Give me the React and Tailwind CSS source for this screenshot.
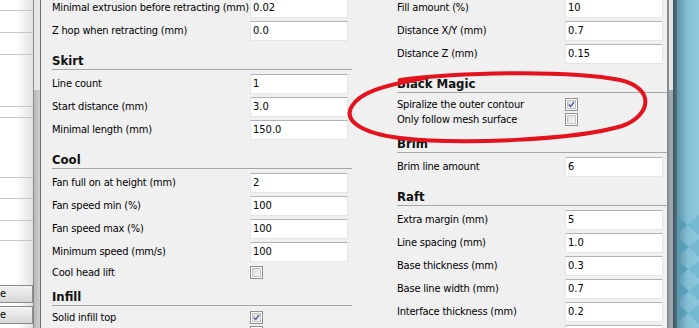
import React from 'react';

// Cura-style "Advanced" settings panel (Windows 7 look)
const leftRows = [
    { t: 'input', label: 'Minimal extrusion before retracting (mm)', value: '0.02' },
    { t: 'input', label: 'Z hop when retracting (mm)', value: '0.0' },
    { t: 'head', label: 'Skirt' },
    { t: 'input', label: 'Line count', value: '1' },
    { t: 'input', label: 'Start distance (mm)', value: '3.0' },
    { t: 'input', label: 'Minimal length (mm)', value: '150.0' },
    { t: 'head', label: 'Cool' },
    { t: 'input', label: 'Fan full on at height (mm)', value: '2' },
    { t: 'input', label: 'Fan speed min (%)', value: '100' },
    { t: 'input', label: 'Fan speed max (%)', value: '100' },
    { t: 'input', label: 'Minimum speed (mm/s)', value: '100' },
    { t: 'check', label: 'Cool head lift', checked: false },
    { t: 'head', label: 'Infill' },
    { t: 'check', label: 'Solid infill top', checked: true },
    { t: 'check', label: 'Solid infill bottom', checked: true },
];

const rightRows = [
    { t: 'input', label: 'Fill amount (%)', value: '10' },
    { t: 'input', label: 'Distance X/Y (mm)', value: '0.7' },
    { t: 'input', label: 'Distance Z (mm)', value: '0.15' },
    { t: 'head', label: 'Black Magic' },
    { t: 'check', label: 'Spiralize the outer contour', checked: true },
    { t: 'check', label: 'Only follow mesh surface', checked: false },
    { t: 'head', label: 'Brim' },
    { t: 'input', label: 'Brim line amount', value: '6' },
    { t: 'head', label: 'Raft' },
    { t: 'input', label: 'Extra margin (mm)', value: '5' },
    { t: 'input', label: 'Line spacing (mm)', value: '1.0' },
    { t: 'input', label: 'Base thickness (mm)', value: '0.3' },
    { t: 'input', label: 'Base line width (mm)', value: '0.7' },
    { t: 'input', label: 'Interface thickness (mm)', value: '0.2' },
    { t: 'input', label: 'Interface line width (mm)', value: '0.4' },
];

function CheckBox({ checked }) {
    return (
        <div className="w-[13px] h-[13px] border border-[#8f8f8f] bg-white p-[1px]">
            <div className="w-full h-full border border-[#c4c4c4] bg-gradient-to-br from-[#dcdcdc] to-[#f8f8f8] flex items-center justify-center">
                {checked && (
                    <svg width="9" height="9" viewBox="0 0 9 9">
                        <path d="M1 4.5 L3.5 7 L8 1.2" fill="none" stroke="#3f5690" strokeWidth="1.6" />
                    </svg>
                )}
            </div>
        </div>
    );
}

function Row({ row, labelW }) {
    if (row.t === 'head') {
        return (
            <div className="h-[26px] flex items-end border-b border-[#a6a6a6] mb-[4px]">
                <span className="text-[13px] leading-[16px] font-bold text-[#111]">{row.label}</span>
            </div>
        );
    }
    if (row.t === 'check') {
        return (
            <div className="h-[15px] flex items-center">
                <span className={`${labelW} text-[11px] leading-[13px] tracking-[-0.2px] text-black whitespace-nowrap`}>{row.label}</span>
                <CheckBox checked={row.checked} />
            </div>
        );
    }
    return (
        <div className="h-[23px] flex items-start">
            <span className={`${labelW} h-[20px] flex items-center text-[11px] tracking-[-0.2px] text-black whitespace-nowrap`}>{row.label}</span>
            <div className="w-[98px] h-[20px] bg-white border border-[#e2e5ea] border-t-[#b0b3b8] rounded-[1px] flex items-center pl-[2px] text-[11px] text-black">
                {row.value}
            </div>
        </div>
    );
}

function LeftPane() {
    const lineRow = "border-b border-[#c8c8c8] w-full";
    return (
        <div className="w-[33px] h-full bg-gradient-to-r from-white via-white to-[#e2e2e2] flex flex-col overflow-hidden">
            <div className={`h-[11px] ${lineRow}`} />
            <div className={`h-[22px] ${lineRow}`} />
            <div className={`h-[22px] ${lineRow}`} />
            <div className={`h-[52px] ${lineRow}`} />
            <div className={`h-[11px] ${lineRow}`} />
            <div className={`h-[60px] ${lineRow}`} />
            <div className={`h-[21px] ${lineRow}`} />
            <div className={`h-[22px] ${lineRow}`} />
            <div className={`h-[20px] ${lineRow}`} />
            <div className="h-[44px]" />
            <div className="h-[18px] border border-[#8a8a8a] border-l-0 bg-gradient-to-b from-[#f4f4f4] to-[#d6d6d6] flex items-center text-[11px] text-black">e</div>
            <div className="h-[3px]" />
            <div className="h-[18px] border border-[#8a8a8a] border-l-0 bg-gradient-to-b from-[#f4f4f4] to-[#d6d6d6] flex items-center text-[11px] text-black">e</div>
        </div>
    );
}

export default function App() {
    return (
        <div className="relative w-[699px] h-[328px] overflow-hidden flex font-['DejaVu_Sans_Condensed','DejaVu_Sans',sans-serif] bg-[#f0f0f0]">
            <LeftPane />

            {/* splitter scroll strip */}
            <div className="w-[8px] h-full border-l border-[#8a8a8a] border-r border-r-[#6f6f6f] flex flex-col">
                <div className="h-[90px] bg-[#e6e6e6]" />
                <div className="flex-1 bg-gradient-to-r from-[#b8b8b8] to-[#cfcfcf]" />
            </div>

            {/* settings panel */}
            <div className="w-[626px] h-full bg-[#f0f0f0] pl-[11px] flex gap-[45px]">
                <div className="w-[300px] -mt-[2px] flex flex-col pr-[4px]">
                    {leftRows.map((r, i) => (
                        <div key={i} className={r.t === 'head' ? '-mr-[4px]' : ''}>
                            <Row row={r} labelW="w-[198px]" />
                        </div>
                    ))}
                </div>
                <div className="w-[270px] -mt-[2px] flex flex-col pr-[4px]">
                    {rightRows.map((r, i) => (
                        <div key={i} className={r.t === 'head' ? '-mr-[4px]' : ''}>
                            <Row row={r} labelW="w-[168px]" />
                        </div>
                    ))}
                </div>
            </div>

            {/* right scrollbar */}
            <div className="w-[10px] h-full flex">
                <div className="w-[2px] bg-[#8c8c8c]" />
                <div className="w-[4px] flex flex-col">
                    <div className="h-[90px] bg-[#e4e4e4]" />
                    <div className="flex-1 bg-[#9aa8ad]" />
                </div>
                <div className="w-[4px] bg-gradient-to-r from-[#3e5560] to-[#56727e]" />
            </div>

            {/* desktop background */}
            <div className="w-[22px] h-full bg-gradient-to-r from-[#5d93a8] via-[#84c0d6] to-[#8dc8dc] flex flex-col">
                <div className="h-[215px]" />
                <svg width="22" height="113" viewBox="0 0 22 113">
                    <path d="M0 0 L10 10 L0 20 Z M0 22 L12 32 L0 42 Z M0 44 L11 54 L0 64 Z M0 66 L12 76 L0 86 Z M0 88 L11 98 L0 108 Z" fill="#4f97b3" opacity="0.7" />
                    <path d="M10 10 L22 0 L22 20 Z M12 32 L22 24 L22 42 Z M11 54 L22 46 L22 64 Z M12 76 L22 68 L22 86 Z M11 98 L22 90 L22 110 Z" fill="#6fb6cf" opacity="0.8" />
                </svg>
            </div>

            {/* red hand-drawn annotation */}
            <svg className="absolute left-0 top-0 pointer-events-none" width="699" height="328" viewBox="0 0 699 328">
                <path
                    d="M400 80 C460 72 570 70 620 80 C655 88 652 115 622 126 C575 140 460 145 400 138 C360 133 343 120 352 106 C360 93 380 86 425 78"
                    fill="none" stroke="#e3121c" strokeWidth="4" strokeLinecap="round"
                />
            </svg>
        </div>
    );
}
